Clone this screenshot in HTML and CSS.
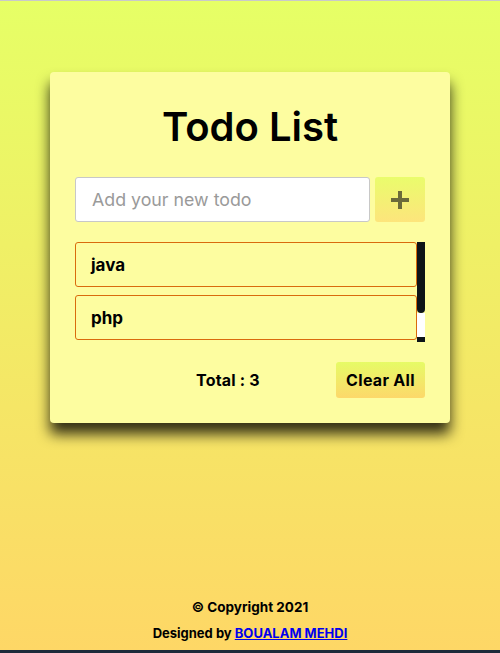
FILE: index.html
```html
<!DOCTYPE html>
<html lang="en">
<head>
<meta charset="UTF-8">
<title>Todo List</title>
<link rel="stylesheet" href="styles.css">
</head>
<body>
<main class="page">
  <section class="card">
    <h1 class="title">Todo List</h1>
    <div class="input-row">
      <input class="todo-input" type="text" placeholder="Add your new todo">
      <button class="add-btn" aria-label="Add">
        <svg width="20" height="20" viewBox="0 0 20 20"><path d="M10 1v18M1 10h18" stroke="#6b6b3a" stroke-width="4"/></svg>
      </button>
    </div>
    <div class="list-wrap">
      <ul class="todo-list">
        <li class="todo-item">java</li>
        <li class="todo-item">php</li>
        <li class="todo-item">html</li>
      </ul>
      <div class="scrollbar">
        <div class="scroll-thumb"></div>
        <div class="scroll-track"></div>
        <div class="scroll-end"></div>
      </div>
    </div>
    <div class="card-footer">
      <span class="total">Total : 3</span>
      <button class="clear-btn">Clear All</button>
    </div>
  </section>
  <footer class="site-footer">
    <p class="copy">© Copyright 2021</p>
    <p class="credit">Designed by <a href="#">BOUALAM MEHDI</a></p>
  </footer>
</main>
</body>
</html>
```
FILE: styles.css
```css
html {
  margin: 0;
  padding: 0;
  border-top: 1px solid #c9c9c9;
  background: #1c2a3a;
  height: 652px;
  overflow: hidden;
}
body {
  margin: 0;
  font-family: Inter, "Open Sans", sans-serif;
  color: #000;
}
.page {
  height: 649px;
  background: linear-gradient(to bottom, #e6ff66, #fed766);
  display: flex;
  flex-direction: column;
  align-items: center;
  box-sizing: border-box;
  padding-top: 71px;
}
.card {
  width: 400px;
  box-sizing: border-box;
  padding: 25px;
  background: #fdfda0;
  border-radius: 4px;
  box-shadow: 0 11px 14px rgba(0, 0, 0, 0.8);
}
.title {
  margin: 0 0 20px;
  height: 60px;
  line-height: 60px;
  text-align: center;
  font-size: 40px;
  font-weight: 600;
}
.input-row {
  display: flex;
  gap: 5px;
  height: 45px;
}
.todo-input {
  flex: 1;
  min-width: 0;
  box-sizing: border-box;
  height: 45px;
  border: 1px solid #c8c8c8;
  border-radius: 3px;
  padding: 0 16px;
  font-family: inherit;
  font-size: 17.8px;
  outline: none;
  background: #fff;
}
.todo-input::placeholder { color: #9a9a9a; }
.add-btn {
  width: 50px;
  height: 45px;
  border: none;
  border-radius: 3px;
  background: linear-gradient(to bottom, #eafc6c, #fde57c);
  display: flex;
  align-items: center;
  justify-content: center;
  padding: 0;
}
.list-wrap {
  margin-top: 20px;
  height: 100px;
  display: flex;
}
.todo-list {
  flex: 1;
  list-style: none;
  margin: 0;
  padding: 0;
  overflow: hidden;
}
.scrollbar {
  width: 8px;
  display: flex;
  flex-direction: column;
}
.scroll-thumb {
  height: 71px;
  background: #0d1418;
  border-radius: 0 0 5px 5px;
}
.scroll-track {
  flex: 1;
  background: #fff;
}
.scroll-end {
  height: 5px;
  background: #0d1418;
}
.todo-item {
  box-sizing: border-box;
  height: 45px;
  border: 1px solid #d96b0c;
  border-radius: 3px;
  margin-bottom: 8px;
  padding: 0 15px;
  display: flex;
  align-items: center;
  font-size: 17px;
  font-weight: 700;
}
.card-footer {
  margin-top: 20px;
  display: flex;
  align-items: center;
  justify-content: space-between;
  padding-left: 121px;
}
.total {
  font-size: 16px;
  font-weight: 700;
  letter-spacing: 0.2px;
}
.clear-btn {
  width: 89px;
  height: 36px;
  border: none;
  border-radius: 3px;
  background: linear-gradient(to bottom, #e6fb66, #fdd86a);
  font-family: inherit;
  font-size: 16px;
  font-weight: 700;
  letter-spacing: 0.3px;
  color: #000;
  padding: 0;
}
.site-footer {
  margin-top: auto;
  padding-bottom: 9px;
  text-align: center;
  font-weight: 700;
}
.copy { margin: 0 0 10px; font-size: 13.5px; }
.credit { margin: 0; font-size: 13px; }
.credit a { color: #0000ee; }
```
